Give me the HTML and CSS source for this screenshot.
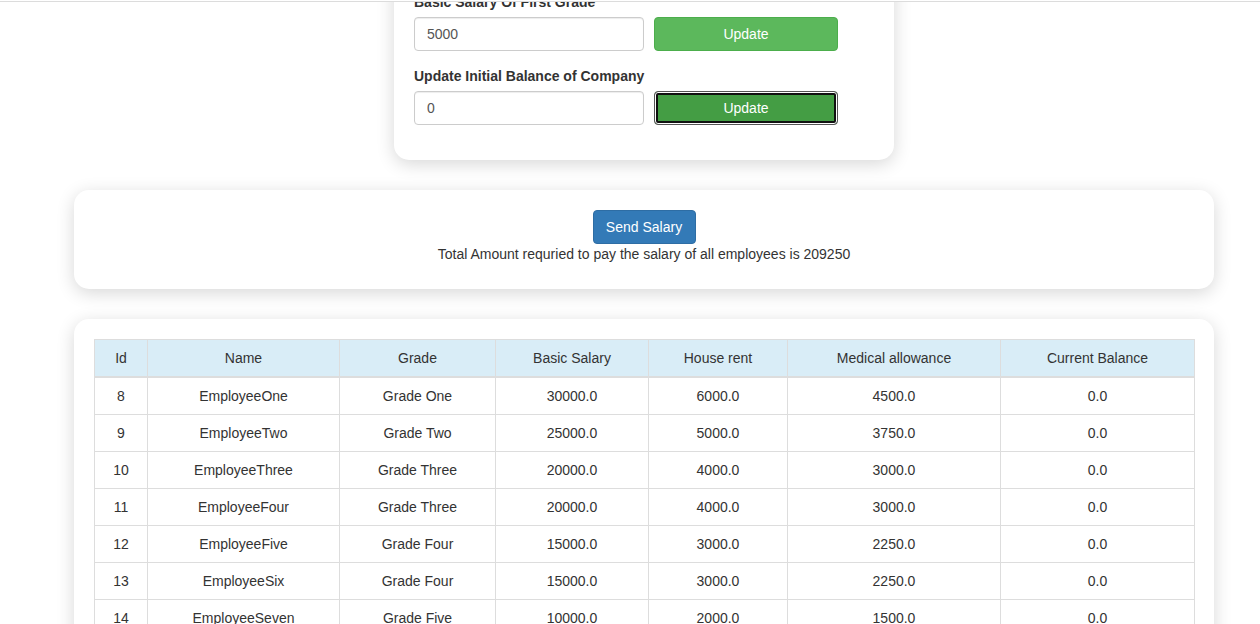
FILE: index.html
```html
<!DOCTYPE html>
<html>
<head>
<meta charset="utf-8">
<title>Salary</title>
<link rel="stylesheet" href="styles.css">
</head>
<body>
<div class="topline"></div>
<main class="page">
  <section class="card settings">
    <div class="form-group">
      <label class="lbl">Basic Salary Of First Grade</label>
      <div class="row">
        <input class="input" type="text" value="5000">
        <button class="btn btn-success">Update</button>
      </div>
    </div>
    <div class="form-group">
      <label class="lbl">Update Initial Balance of Company</label>
      <div class="row">
        <input class="input" type="text" value="0">
        <button class="btn btn-success focused">Update</button>
      </div>
    </div>
  </section>

  <section class="card wide pay">
    <button class="btn btn-primary">Send Salary</button>
    <p class="total">Total Amount requried to pay the salary of all employees is 209250</p>
  </section>

  <section class="card wide tablecard">
    <table class="tbl">
      <colgroup>
        <col class="c-id"><col class="c-name"><col class="c-grade"><col class="c-basic"><col class="c-house"><col class="c-med"><col class="c-bal">
      </colgroup>
      <thead>
        <tr><th>Id</th><th>Name</th><th>Grade</th><th>Basic Salary</th><th>House rent</th><th>Medical allowance</th><th>Current Balance</th></tr>
      </thead>
      <tbody>
        <tr><td>8</td><td>EmployeeOne</td><td>Grade One</td><td>30000.0</td><td>6000.0</td><td>4500.0</td><td>0.0</td></tr>
        <tr><td>9</td><td>EmployeeTwo</td><td>Grade Two</td><td>25000.0</td><td>5000.0</td><td>3750.0</td><td>0.0</td></tr>
        <tr><td>10</td><td>EmployeeThree</td><td>Grade Three</td><td>20000.0</td><td>4000.0</td><td>3000.0</td><td>0.0</td></tr>
        <tr><td>11</td><td>EmployeeFour</td><td>Grade Three</td><td>20000.0</td><td>4000.0</td><td>3000.0</td><td>0.0</td></tr>
        <tr><td>12</td><td>EmployeeFive</td><td>Grade Four</td><td>15000.0</td><td>3000.0</td><td>2250.0</td><td>0.0</td></tr>
        <tr><td>13</td><td>EmployeeSix</td><td>Grade Four</td><td>15000.0</td><td>3000.0</td><td>2250.0</td><td>0.0</td></tr>
        <tr><td>14</td><td>EmployeeSeven</td><td>Grade Five</td><td>10000.0</td><td>2000.0</td><td>1500.0</td><td>0.0</td></tr>
        <tr><td>15</td><td>EmployeeEight</td><td>Grade Five</td><td>10000.0</td><td>2000.0</td><td>1500.0</td><td>0.0</td></tr>
      </tbody>
    </table>
  </section>
</main>
</body>
</html>
```

FILE: styles.css
```css
* { box-sizing: border-box; }
html, body { margin: 0; padding: 0; background: #fff; }
body {
  font-family: "Liberation Sans", Arial, Helvetica, sans-serif;
  font-size: 14px;
  line-height: 20px;
  color: #333;
  overflow: hidden;
}
.topline {
  position: fixed;
  top: 0; left: 0; right: 0;
  height: 2px;
  border-bottom: 1px solid #dcdcdc;
  background: #fff;
  z-index: 5;
}
.page {
  display: flex;
  flex-direction: column;
  align-items: center;
  gap: 30px;
  margin-top: -28px;
  padding-left: 28px;
}
.card {
  background: #fff;
  border-radius: 15px;
  box-shadow: 0 4px 18px rgba(0, 0, 0, 0.16);
}
.settings {
  width: 500px;
  padding: 20px 20px 20px 20px;
}
.form-group { margin-bottom: 15px; }
.lbl {
  display: block;
  font-weight: 700;
  margin-bottom: 5px;
}
.row { display: flex; gap: 10px; }
.input {
  width: 230px;
  height: 34px;
  padding: 6px 12px;
  font: inherit;
  color: #555;
  border: 1px solid #ccc;
  border-radius: 4px;
  box-shadow: inset 0 1px 1px rgba(0,0,0,0.075);
}
.btn {
  height: 34px;
  padding: 6px 12px;
  font: inherit;
  color: #fff;
  border-radius: 4px;
  border: 1px solid transparent;
  text-align: center;
}
.btn-success {
  width: 184px;
  background: #5cb85c;
  border-color: #4cae4c;
}
.btn-success.focused {
  background: #449d44;
  border-color: #555;
  box-shadow: inset 0 0 0 1px #fff, inset 0 0 0 3px #111;
}
.btn-primary {
  background: #337ab7;
  border-color: #2e6da4;
  width: 103px;
}
.wide { width: 1140px; }
.pay {
  padding: 20px 20px 25px;
  display: flex;
  flex-direction: column;
  align-items: center;
}
.total { margin: 0; }
.tablecard { padding: 20px; }
.tbl {
  width: 1100px;
  border-collapse: collapse;
  table-layout: fixed;
  border: 1px solid #ddd;
}
.c-id { width: 53px; }
.c-name { width: 192px; }
.c-grade { width: 156px; }
.c-basic { width: 153px; }
.c-house { width: 139px; }
.c-med { width: 213px; }
.c-bal { width: 194px; }
.tbl th, .tbl td {
  border: 1px solid #ddd;
  padding: 8px;
  text-align: center;
  font-weight: 400;
  line-height: 20px;
}
.tbl th {
  background: #d9edf7;
  border-bottom: 2px solid #ddd;
}
```
